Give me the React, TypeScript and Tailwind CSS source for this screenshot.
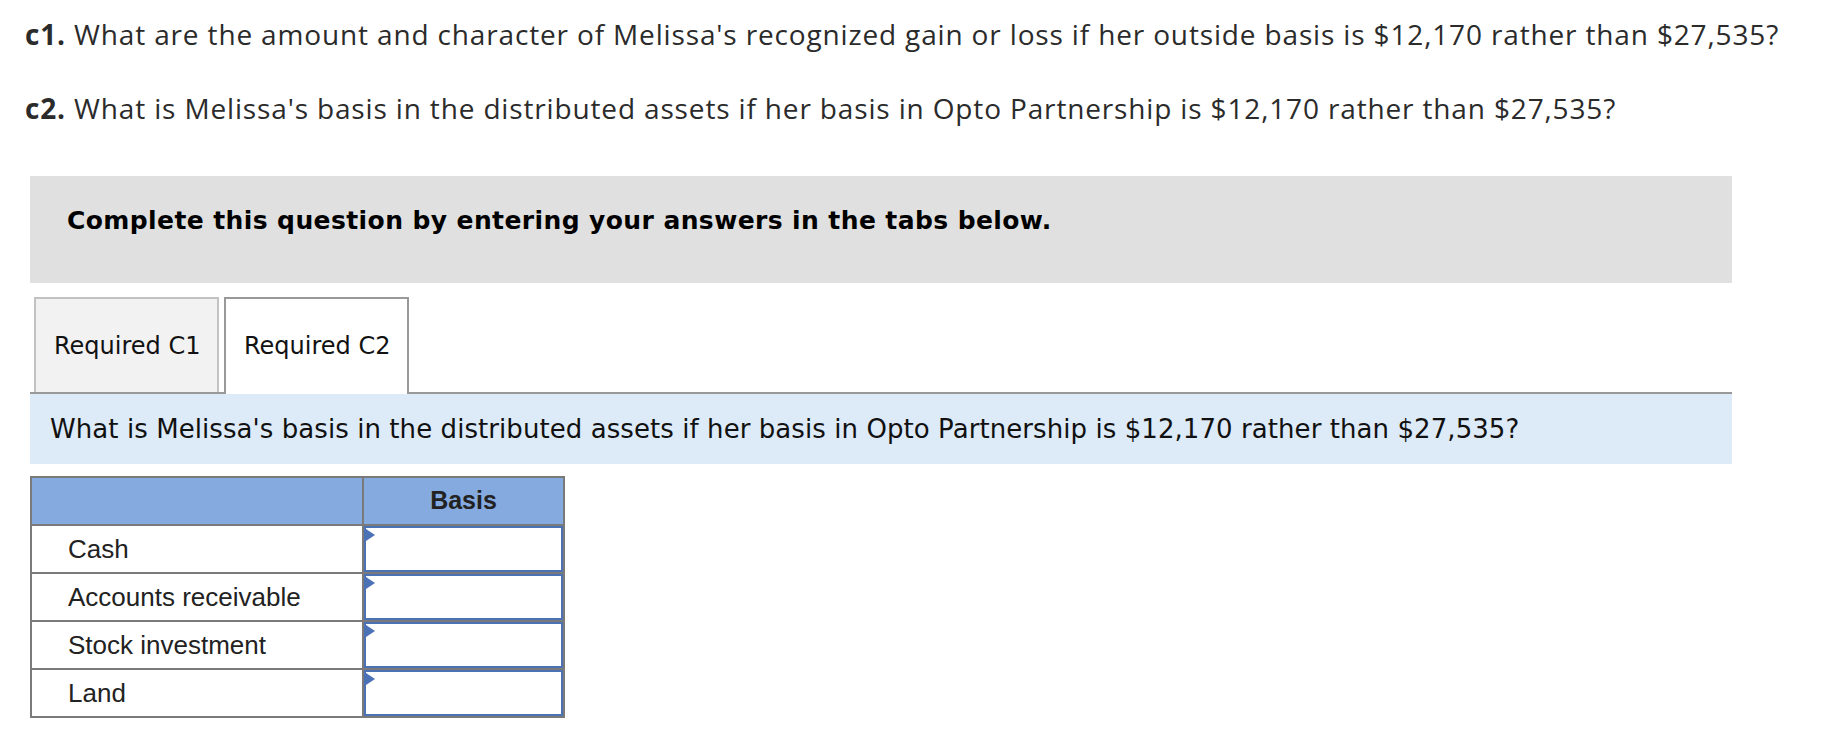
import React from "react";

const rows = ["Cash", "Accounts receivable", "Stock investment", "Land"];

function InputCell() {
  return (
    <div className="relative h-full w-full border-2 border-[#4a72b4] bg-white">
      <div className="absolute left-0 top-[1px] h-0 w-0 border-y-[6px] border-l-[9px] border-y-transparent border-l-[#4a72b4]" />
    </div>
  );
}

export default function App() {
  return (
    <div className="h-[730px] w-[1826px] overflow-hidden bg-white">
      <div className="px-[25px] pt-[16px] font-['Open_Sans',sans-serif] text-[28px] leading-[36px] tracking-[0.85px] text-[#2b2b2b]">
        <p>
          <span className="font-bold">c1.</span> What are the amount and character of Melissa's recognized gain or loss if her outside basis is $12,170 rather than $27,535?
        </p>
        <p className="mt-[38px]">
          <span className="font-bold">c2.</span> What is Melissa's basis in the distributed assets if her basis in Opto Partnership is $12,170 rather than $27,535?
        </p>
      </div>

      <div className="ml-[30px] mt-[50px] w-[1702px]">
        <div className="h-[107px] bg-[#e0e0e0] pl-[37px] pt-[30px] font-['DejaVu_Sans',sans-serif] text-[25px] font-bold leading-[30px] tracking-[0.4px] text-black">
          Complete this question by entering your answers in the tabs below.
        </div>

        <div className="mt-[14px] flex items-end gap-[5px] border-b-2 border-[#999999] pl-[4px] font-['DejaVu_Sans',sans-serif] text-[24px] text-[#111]">
          <div className="flex h-[95px] w-[185px] items-center border-2 border-b-0 border-[#c2c2c2] bg-[#f2f2f2] pl-[18px]">
            Required C1
          </div>
          <div className="-mb-[2px] flex h-[97px] w-[185px] items-center border-2 border-b-0 border-[#999999] bg-white pb-[2px] pl-[18px]">
            Required C2
          </div>
        </div>

        <div className="flex h-[70px] items-center bg-[#ddeaf7] pl-[20px] font-['DejaVu_Sans',sans-serif] text-[26px] tracking-[0.07px] text-[#111]">
          What is Melissa's basis in the distributed assets if her basis in Opto Partnership is $12,170 rather than $27,535?
        </div>

        <div className="mt-[12px] w-[535px] border-2 border-[#7a7a7a] font-['Liberation_Sans',sans-serif] text-[26px] text-[#222]">
          <div className="flex h-[46px] bg-[#84aadf]">
            <div className="w-[332px] border-r-2 border-[#7a7a7a]" />
            <div className="flex flex-1 items-center justify-center text-[25px] font-bold">Basis</div>
          </div>
          {rows.map((r) => (
            <div key={r} className="flex h-[48px] border-t-2 border-[#7a7a7a]">
              <div className="flex w-[332px] items-center border-r-2 border-[#7a7a7a] pl-[36px]">{r}</div>
              <div className="flex-1 p-0">
                <InputCell />
              </div>
            </div>
          ))}
        </div>
      </div>
    </div>
  );
}
